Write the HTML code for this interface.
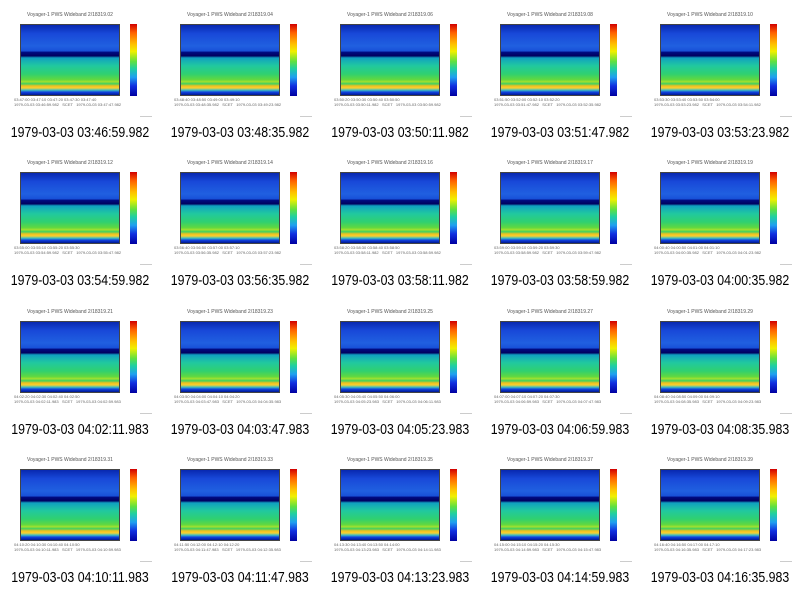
<!DOCTYPE html>
<html><head><style>
body{margin:0;width:800px;height:596px;background:#fff;overflow:hidden;font-family:"Liberation Sans",sans-serif;position:relative}
.c{position:absolute;width:160px;height:148px}
.t{position:absolute;left:20px;top:12px;width:100px;text-align:center;font-size:5px;color:#555;white-space:nowrap}
.p{position:absolute;left:20px;top:24px;width:100px;height:72px;border:1px solid #444;box-sizing:border-box;
background:linear-gradient(to bottom,#0828b0 0%,#1848d8 12%,#2060e0 30%,#1850d8 37%,#000a80 39%,#000060 44%,#10a0c0 47%,#20c8a0 58%,#30d070 70%,#60d840 78%,#a0e030 81%,#40d060 84%,#f0c020 87%,#f8d030 90%,#40c0c0 93%,#1040e0 96%,#001890 100%)}
.cb{position:absolute;left:130px;top:24px;width:7px;height:72px;background:linear-gradient(to bottom,#d00000,#ff6000 12%,#ffc000 28%,#f0f000 38%,#60e040 52%,#20d0a0 62%,#20a0f0 74%,#1030e0 86%,#0000a0)}
.ax{position:absolute;left:14px;top:97px;width:115px;font-size:4px;color:#666;line-height:5px;white-space:nowrap}
.sm{position:absolute;left:140px;top:116px;width:12px;height:1px;background:#ccc}
.cap{position:absolute;left:-20px;top:125px;width:200px;text-align:center;font-size:14.5px;color:#000;white-space:nowrap;transform:scaleX(0.85)}
</style></head><body>
<div class="c" style="left:0;top:0"><div class="t">Voyager-1 PWS Wideband 2/18319.02</div><div class="p"></div><div class="cb"></div><div class="ax">03:47:00 03:47:10 03:47:20 03:47:30 03:47:40<br>1979-03-03 03:46:59.982 &nbsp; SCET &nbsp; 1979-03-03 03:47:47.982</div><div class="sm"></div><div class="cap">1979-03-03 03:46:59.982</div></div>
<div class="c" style="left:160px;top:0"><div class="t">Voyager-1 PWS Wideband 2/18319.04</div><div class="p"></div><div class="cb"></div><div class="ax">03:48:40 03:48:50 03:49:00 03:49:10<br>1979-03-03 03:48:35.982 &nbsp; SCET &nbsp; 1979-03-03 03:49:23.982</div><div class="sm"></div><div class="cap">1979-03-03 03:48:35.982</div></div>
<div class="c" style="left:320px;top:0"><div class="t">Voyager-1 PWS Wideband 2/18319.06</div><div class="p"></div><div class="cb"></div><div class="ax">03:50:20 03:50:30 03:50:40 03:50:50<br>1979-03-03 03:50:11.982 &nbsp; SCET &nbsp; 1979-03-03 03:50:59.982</div><div class="sm"></div><div class="cap">1979-03-03 03:50:11.982</div></div>
<div class="c" style="left:480px;top:0"><div class="t">Voyager-1 PWS Wideband 2/18319.08</div><div class="p"></div><div class="cb"></div><div class="ax">03:51:50 03:52:00 03:52:10 03:52:20<br>1979-03-03 03:51:47.982 &nbsp; SCET &nbsp; 1979-03-03 03:52:35.982</div><div class="sm"></div><div class="cap">1979-03-03 03:51:47.982</div></div>
<div class="c" style="left:640px;top:0"><div class="t">Voyager-1 PWS Wideband 2/18319.10</div><div class="p"></div><div class="cb"></div><div class="ax">03:53:30 03:53:40 03:53:50 03:54:00<br>1979-03-03 03:53:23.982 &nbsp; SCET &nbsp; 1979-03-03 03:54:11.982</div><div class="sm"></div><div class="cap">1979-03-03 03:53:23.982</div></div>

<div class="c" style="left:0;top:148px"><div class="t">Voyager-1 PWS Wideband 2/18319.12</div><div class="p"></div><div class="cb"></div><div class="ax">03:55:00 03:55:10 03:55:20 03:55:30<br>1979-03-03 03:54:59.982 &nbsp; SCET &nbsp; 1979-03-03 03:55:47.982</div><div class="sm"></div><div class="cap">1979-03-03 03:54:59.982</div></div>
<div class="c" style="left:160px;top:148px"><div class="t">Voyager-1 PWS Wideband 2/18319.14</div><div class="p"></div><div class="cb"></div><div class="ax">03:56:40 03:56:50 03:57:00 03:57:10<br>1979-03-03 03:56:35.982 &nbsp; SCET &nbsp; 1979-03-03 03:57:23.982</div><div class="sm"></div><div class="cap">1979-03-03 03:56:35.982</div></div>
<div class="c" style="left:320px;top:148px"><div class="t">Voyager-1 PWS Wideband 2/18319.16</div><div class="p"></div><div class="cb"></div><div class="ax">03:58:20 03:58:30 03:58:40 03:58:50<br>1979-03-03 03:58:11.982 &nbsp; SCET &nbsp; 1979-03-03 03:58:59.982</div><div class="sm"></div><div class="cap">1979-03-03 03:58:11.982</div></div>
<div class="c" style="left:480px;top:148px"><div class="t">Voyager-1 PWS Wideband 2/18319.17</div><div class="p"></div><div class="cb"></div><div class="ax">03:59:00 03:59:10 03:59:20 03:59:30<br>1979-03-03 03:58:59.982 &nbsp; SCET &nbsp; 1979-03-03 03:59:47.982</div><div class="sm"></div><div class="cap">1979-03-03 03:58:59.982</div></div>
<div class="c" style="left:640px;top:148px"><div class="t">Voyager-1 PWS Wideband 2/18319.19</div><div class="p"></div><div class="cb"></div><div class="ax">04:00:40 04:00:50 04:01:00 04:01:10<br>1979-03-03 04:00:35.982 &nbsp; SCET &nbsp; 1979-03-03 04:01:23.982</div><div class="sm"></div><div class="cap">1979-03-03 04:00:35.982</div></div>

<div class="c" style="left:0;top:297px"><div class="t">Voyager-1 PWS Wideband 2/18319.21</div><div class="p"></div><div class="cb"></div><div class="ax">04:02:20 04:02:30 04:02:40 04:02:50<br>1979-03-03 04:02:11.983 &nbsp; SCET &nbsp; 1979-03-03 04:02:59.983</div><div class="sm"></div><div class="cap">1979-03-03 04:02:11.983</div></div>
<div class="c" style="left:160px;top:297px"><div class="t">Voyager-1 PWS Wideband 2/18319.23</div><div class="p"></div><div class="cb"></div><div class="ax">04:03:50 04:04:00 04:04:10 04:04:20<br>1979-03-03 04:03:47.983 &nbsp; SCET &nbsp; 1979-03-03 04:04:35.983</div><div class="sm"></div><div class="cap">1979-03-03 04:03:47.983</div></div>
<div class="c" style="left:320px;top:297px"><div class="t">Voyager-1 PWS Wideband 2/18319.25</div><div class="p"></div><div class="cb"></div><div class="ax">04:05:30 04:05:40 04:05:50 04:06:00<br>1979-03-03 04:05:23.983 &nbsp; SCET &nbsp; 1979-03-03 04:06:11.983</div><div class="sm"></div><div class="cap">1979-03-03 04:05:23.983</div></div>
<div class="c" style="left:480px;top:297px"><div class="t">Voyager-1 PWS Wideband 2/18319.27</div><div class="p"></div><div class="cb"></div><div class="ax">04:07:00 04:07:10 04:07:20 04:07:30<br>1979-03-03 04:06:59.983 &nbsp; SCET &nbsp; 1979-03-03 04:07:47.983</div><div class="sm"></div><div class="cap">1979-03-03 04:06:59.983</div></div>
<div class="c" style="left:640px;top:297px"><div class="t">Voyager-1 PWS Wideband 2/18319.29</div><div class="p"></div><div class="cb"></div><div class="ax">04:08:40 04:08:50 04:09:00 04:09:10<br>1979-03-03 04:08:35.983 &nbsp; SCET &nbsp; 1979-03-03 04:09:23.983</div><div class="sm"></div><div class="cap">1979-03-03 04:08:35.983</div></div>

<div class="c" style="left:0;top:445px"><div class="t">Voyager-1 PWS Wideband 2/18319.31</div><div class="p"></div><div class="cb"></div><div class="ax">04:10:20 04:10:30 04:10:40 04:10:50<br>1979-03-03 04:10:11.983 &nbsp; SCET &nbsp; 1979-03-03 04:10:59.983</div><div class="sm"></div><div class="cap">1979-03-03 04:10:11.983</div></div>
<div class="c" style="left:160px;top:445px"><div class="t">Voyager-1 PWS Wideband 2/18319.33</div><div class="p"></div><div class="cb"></div><div class="ax">04:11:50 04:12:00 04:12:10 04:12:20<br>1979-03-03 04:11:47.983 &nbsp; SCET &nbsp; 1979-03-03 04:12:35.983</div><div class="sm"></div><div class="cap">1979-03-03 04:11:47.983</div></div>
<div class="c" style="left:320px;top:445px"><div class="t">Voyager-1 PWS Wideband 2/18319.35</div><div class="p"></div><div class="cb"></div><div class="ax">04:13:30 04:13:40 04:13:50 04:14:00<br>1979-03-03 04:13:23.983 &nbsp; SCET &nbsp; 1979-03-03 04:14:11.983</div><div class="sm"></div><div class="cap">1979-03-03 04:13:23.983</div></div>
<div class="c" style="left:480px;top:445px"><div class="t">Voyager-1 PWS Wideband 2/18319.37</div><div class="p"></div><div class="cb"></div><div class="ax">04:15:00 04:15:10 04:15:20 04:15:30<br>1979-03-03 04:14:59.983 &nbsp; SCET &nbsp; 1979-03-03 04:15:47.983</div><div class="sm"></div><div class="cap">1979-03-03 04:14:59.983</div></div>
<div class="c" style="left:640px;top:445px"><div class="t">Voyager-1 PWS Wideband 2/18319.39</div><div class="p"></div><div class="cb"></div><div class="ax">04:16:40 04:16:50 04:17:00 04:17:10<br>1979-03-03 04:16:35.983 &nbsp; SCET &nbsp; 1979-03-03 04:17:23.983</div><div class="sm"></div><div class="cap">1979-03-03 04:16:35.983</div></div>
</body></html>
